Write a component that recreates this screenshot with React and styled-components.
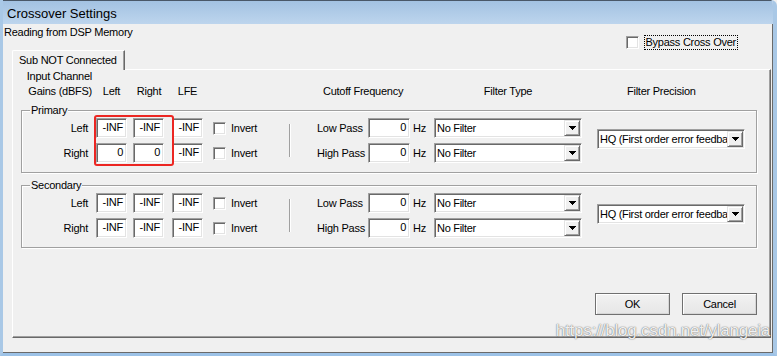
import React from "react";
import styled, { createGlobalStyle } from "styled-components";

// Global reset so the dialog fills the viewport
const GlobalStyle = createGlobalStyle`
  html, body {
    margin: 0;
    padding: 0;
    background: #f0f0f0;
    overflow: hidden;
  }
`;

const groups = [
  {
    title: "Primary",
    highlight: true,
    rows: [
      { label: "Left", gains: ["-INF", "-INF", "-INF"] },
      { label: "Right", gains: ["0", "0", "-INF"] },
    ],
  },
  {
    title: "Secondary",
    rows: [
      { label: "Left", gains: ["-INF", "-INF", "-INF"] },
      { label: "Right", gains: ["-INF", "-INF", "-INF"] },
    ],
  },
];

const passes = [
  { label: "Low Pass", value: "0", filter: "No Filter" },
  { label: "High Pass", value: "0", filter: "No Filter" },
];

// Small down arrow used on combo buttons
const Arrow = () => (
  <svg width="7" height="4" viewBox="0 0 7 4" shapeRendering="crispEdges">
    <path d="M0 0h7v1H0zM1 1h5v1H1zM2 2h3v1H2zM3 3h1v1H3z" fill="#000" />
  </svg>
);

const Combo = ({ text, width = 148 }) => (
  <ComboBox $w={width}>
    <ComboText>{text}</ComboText>
    <DropButton>
      <Arrow />
    </DropButton>
  </ComboBox>
);

const CrossoverGroup = ({ group }) => (
  <Group>
    <Legend>{group.title}</Legend>
    {group.highlight && <Highlight />}
    <GroupContent>
      <ChannelGrid>
        {group.rows.map((row) => (
          <React.Fragment key={row.label}>
            <RowLabel>{row.label}</RowLabel>
            {row.gains.map((g, i) => (
              <Field key={i} $w={31}>
                {g}
              </Field>
            ))}
            <CheckBox />
            <span>Invert</span>
          </React.Fragment>
        ))}
      </ChannelGrid>
      <Separator />
      <FreqGrid>
        {passes.map((p) => (
          <React.Fragment key={p.label}>
            <span>{p.label}</span>
            <Field $w={42}>{p.value}</Field>
            <Hz>Hz</Hz>
            <Combo text={p.filter} />
          </React.Fragment>
        ))}
      </FreqGrid>
      <PrecisionSlot>
        {/* the list box is narrower than its entry, only this much shows */}
        <Combo text="HQ (First order error feedba" />
      </PrecisionSlot>
    </GroupContent>
  </Group>
);

const App = () => {
  return (
    <>
      <GlobalStyle />
      <Window>
        <TitleBar>Crossover Settings</TitleBar>
        <Body>
          <HeaderRow>
            <Status>Reading from DSP Memory</Status>
            <Bypass>
              <CheckBox />
              <FocusLabel>Bypass Cross Over</FocusLabel>
            </Bypass>
          </HeaderRow>
          <TabStrip>
            <Tab>Sub NOT Connected</Tab>
          </TabStrip>
          <Panel>
            <HeaderGrid>
              <HeadRight style={{ gridRow: 1 }}>Input Channel</HeadRight>
              <HeadRight>Gains (dBFS)</HeadRight>
              <HeadCenter>Left</HeadCenter>
              <HeadCenter>Right</HeadCenter>
              <HeadCenter>LFE</HeadCenter>
              <span />
              <span>Cutoff Frequency</span>
              <HeadCenter>Filter Type</HeadCenter>
              <span />
              <span>Filter Precision</span>
            </HeaderGrid>
            {groups.map((g) => (
              <CrossoverGroup key={g.title} group={g} />
            ))}
            <ButtonRow>
              <Button>OK</Button>
              <Button>Cancel</Button>
            </ButtonRow>
          </Panel>
        </Body>
        <Watermark>https://blog.csdn.net/ylangeia</Watermark>
      </Window>
    </>
  );
};

// Styled-components
const Window = styled.div`
  position: relative;
  box-sizing: border-box;
  width: 777px;
  height: 356px;
  display: flex;
  flex-direction: column;
  background: #f0f0f0;
  border-left: 3px solid #a9c8e6;
  border-right: 4px solid #a9c8e6;
  border-bottom: 3px solid #9cc2e7;
  border-top-right-radius: 6px;
  font-family: "Liberation Sans", Arial, sans-serif;
  font-size: 11px;
  letter-spacing: -0.25px;
  color: #000;
  overflow: hidden;
`;

const TitleBar = styled.div`
  box-sizing: border-box;
  height: 24px;
  flex-shrink: 0;
  display: flex;
  align-items: center;
  padding: 1px 0 0 4px;
  border-top: 1px solid #4a5868;
  background: linear-gradient(#a3c2e2, #bdd5ed);
  font-size: 13px;
  letter-spacing: 0;
`;

const Body = styled.div`
  flex: 1;
  display: flex;
  flex-direction: column;
  padding-bottom: 14px;
  border-right: 1px solid #6a6a6a;
  border-bottom: 1px solid #6a6a6a;
  min-height: 0;
`;

const HeaderRow = styled.div`
  height: 26px;
  display: flex;
  justify-content: space-between;
  align-items: flex-start;
`;

const Status = styled.div`
  padding: 2px 0 0 1px;
  line-height: 13px;
`;

const Bypass = styled.div`
  display: flex;
  align-items: center;
  gap: 5px;
  margin: 11px 34px 0 0;
`;

const FocusLabel = styled.span`
  border: 1px dotted #000;
  padding: 0 1px;
  line-height: 13px;
`;

const TabStrip = styled.div`
  display: flex;
  padding-left: 9px;
  height: 20px;
  margin-bottom: -1px;
`;

const Tab = styled.div`
  position: relative;
  z-index: 1;
  box-sizing: border-box;
  height: 20px;
  padding: 0 7px 0 6px;
  line-height: 18px;
  background: #f0f0f0;
  border-top: 1px solid #fff;
  border-left: 1px solid #fff;
  border-right: 1px solid #696969;
  border-top-left-radius: 2px;
  box-shadow: inset -1px 0 #a0a0a0;
`;

const Panel = styled.div`
  flex: 1;
  display: flex;
  flex-direction: column;
  margin: 0 1px 0 9px;
  padding: 0 13px 0 8px;
  border: 1px solid;
  border-color: #fff #696969 #696969 #fff;
  box-shadow: inset -1px -1px #a0a0a0;
`;

const HeaderGrid = styled.div`
  display: grid;
  grid-template-columns: 71px 39px 36px 41px 115px 111px 148px 45px auto;
  grid-template-rows: 13px 13px;
  row-gap: 2px;
  line-height: 13px;

  & > * {
    grid-row: 2;
  }
`;

const HeadRight = styled.span`
  text-align: right;
  grid-column: 1;
`;

const HeadCenter = styled.span`
  text-align: center;
`;

const Group = styled.div`
  position: relative;
  margin-top: 12px;
  padding: 7px 0 9px;
  border: 1px solid #a0a0a0;
  box-shadow: inset 1px 1px #fff, 1px 1px #fff;

  &:first-of-type {
    margin-top: 16px;
  }
`;

const Legend = styled.span`
  position: absolute;
  top: -7px;
  left: 8px;
  padding: 0 1px;
  line-height: 13px;
  background: #f0f0f0;
`;

const Highlight = styled.div`
  position: absolute;
  left: 72px;
  top: 4px;
  width: 80px;
  height: 51px;
  box-sizing: border-box;
  border: 2px solid #ec2622;
  border-radius: 3px;
  pointer-events: none;
`;

const GroupContent = styled.div`
  display: flex;
  align-items: stretch;
`;

const ChannelGrid = styled.div`
  display: grid;
  grid-template-columns: 74px 37px 39px 41px 18px 58px;
  grid-auto-rows: 20px;
  row-gap: 5px;
  align-items: center;
`;

const RowLabel = styled.span`
  text-align: right;
  padding-right: 8px;
`;

const Separator = styled.div`
  align-self: center;
  width: 0;
  height: 33px;
  border-left: 1px solid #a0a0a0;
  border-right: 1px solid #fff;
`;

const FreqGrid = styled.div`
  margin-left: 26px;
  display: grid;
  grid-template-columns: 51px 42px 24px 148px;
  grid-auto-rows: 20px;
  row-gap: 5px;
  align-items: center;
`;

const Hz = styled.span`
  padding-left: 3px;
`;

const PrecisionSlot = styled.div`
  margin: 0 0 4px 15px;
  align-self: center;
`;

const sunken = `
  border: 1px solid;
  border-color: #a0a0a0 #fff #fff #a0a0a0;
  box-shadow: inset 1px 1px #696969, inset -1px -1px #e3e3e3;
`;

const Field = styled.div`
  box-sizing: border-box;
  width: ${(p) => p.$w}px;
  height: 20px;
  padding: 0 3px;
  background: #fff;
  text-align: right;
  line-height: 16px;
  ${sunken}
`;

const CheckBox = styled.span`
  box-sizing: border-box;
  display: block;
  width: 13px;
  height: 13px;
  background: #fff;
  ${sunken}
`;

const ComboBox = styled.div`
  box-sizing: border-box;
  width: ${(p) => p.$w}px;
  height: 20px;
  display: flex;
  padding: 1px;
  background: #fff;
  ${sunken}
`;

const ComboText = styled.span`
  flex: 1;
  min-width: 0;
  padding-left: 1px;
  overflow: hidden;
  white-space: nowrap;
  line-height: 16px;
  letter-spacing: -0.3px;
`;

const DropButton = styled.span`
  box-sizing: border-box;
  width: 16px;
  flex-shrink: 0;
  display: flex;
  align-items: center;
  justify-content: center;
  background: #f0f0f0;
  border: 1px solid;
  border-color: #e3e3e3 #696969 #696969 #e3e3e3;
  box-shadow: inset 1px 1px #fff, inset -1px -1px #a0a0a0;
`;

const ButtonRow = styled.div`
  display: flex;
  justify-content: flex-end;
  gap: 12px;
  margin-top: 45px;
`;

const Button = styled.button`
  box-sizing: border-box;
  width: 75px;
  height: 22px;
  padding: 0;
  font: inherit;
  letter-spacing: inherit;
  color: #000;
  background: linear-gradient(#f2f2f2, #e6e6e6);
  border: 1px solid #707070;
  box-shadow: inset 1px 1px #fff, inset -1px -1px #d6d6d6;
`;

const Watermark = styled.div`
  position: absolute;
  right: 3px;
  bottom: 12px;
  font-size: 17px;
  letter-spacing: -0.2px;
  color: rgba(255, 255, 255, 0.92);
  text-shadow: 0 0 1px rgba(0, 0, 0, 0.6), 0 0 2px rgba(0, 0, 0, 0.25);
  pointer-events: none;
`;

export default App;
